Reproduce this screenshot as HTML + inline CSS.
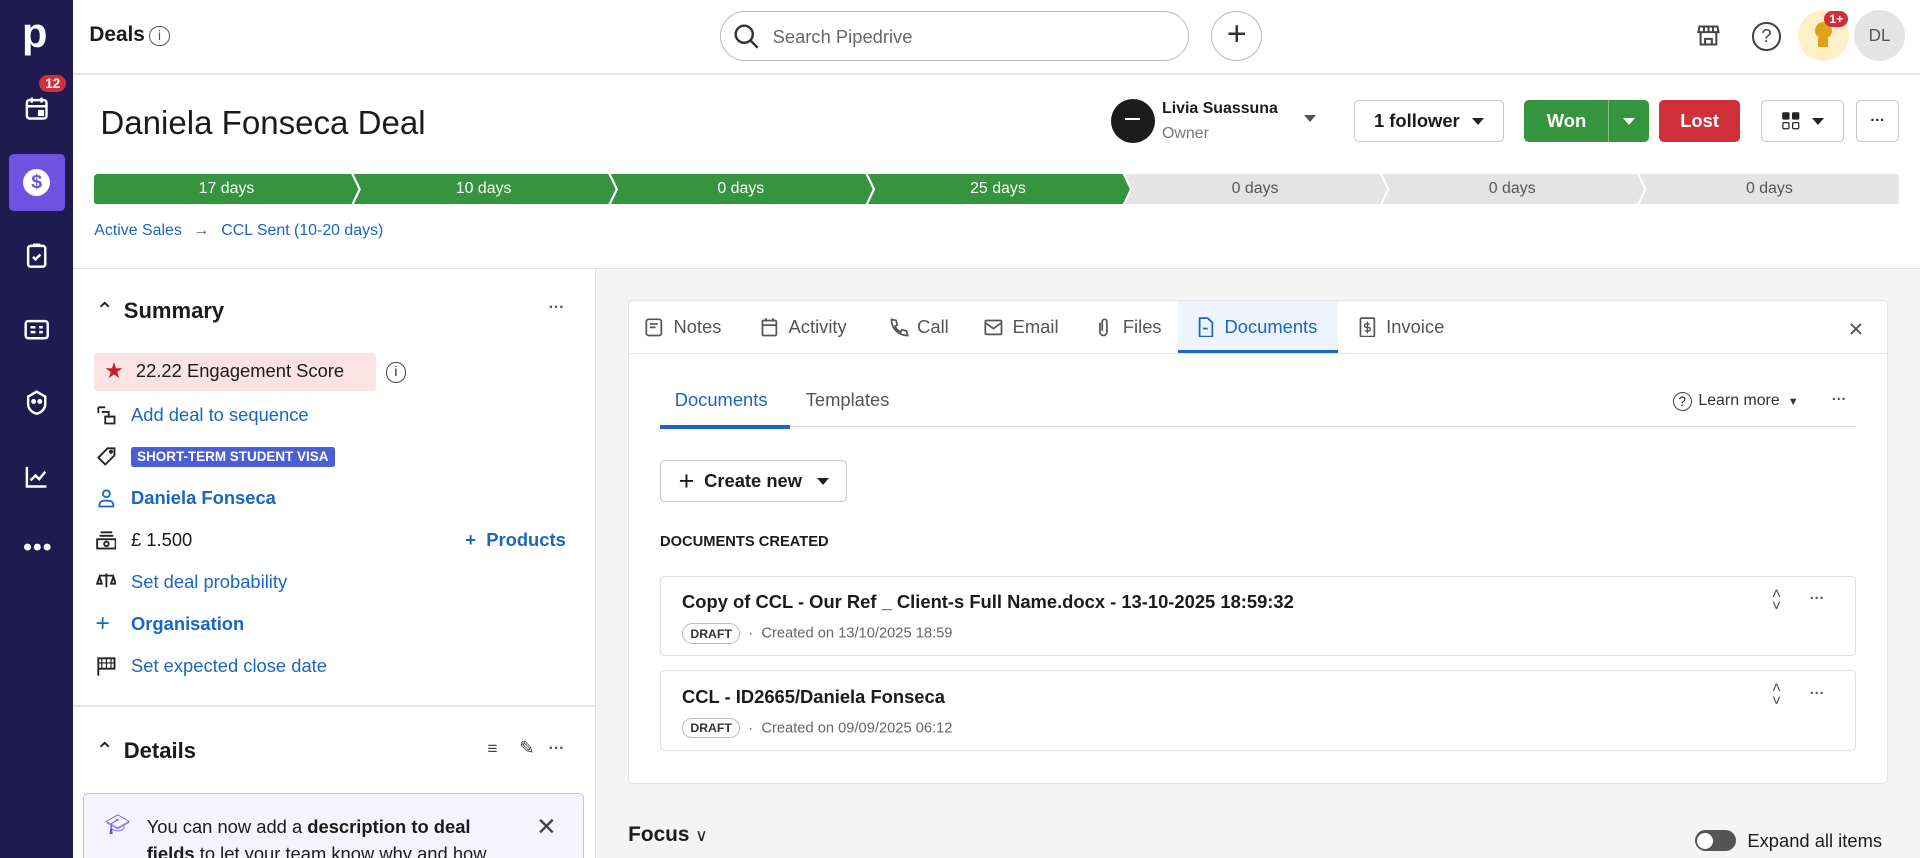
<!DOCTYPE html>
<html><head><meta charset="utf-8">
<style>
html{zoom:1.22449;background:#fff;overflow:hidden;height:701px}
body{margin:0;width:1568px;height:701px;position:relative;overflow:hidden;font-family:"Liberation Sans",sans-serif;color:#1b1b1b;background:#fff}
.a{position:absolute}
.sb{left:0;top:0;width:60px;height:701px;background:#1f1a4f}
.ic{position:absolute;left:18px;width:24px;height:24px}
.blue{color:#1a66c0}
.seg{position:absolute;top:142px;height:24px;line-height:25px;text-align:center;font-size:13px;color:#fff}
.btn{position:absolute;border:1px solid #c8c8c8;border-radius:4px;background:#fff;box-sizing:border-box;font-weight:bold;font-size:15px;display:flex;align-items:center;justify-content:center}
.row{position:absolute;left:78px;font-size:15px;display:flex;align-items:center;height:22px}
.row svg{margin-right:12px}
.tab{position:absolute;top:257px;font-size:15px;color:#555;display:flex;align-items:center;height:20px}
.tab svg{margin-right:7px}
.card{position:absolute;left:539px;width:977px;height:66px;border:1px solid #ddd;border-radius:4px;background:#fff;box-sizing:border-box}
.draft{display:inline-block;border:1px solid #bbb;border-radius:10px;font-size:10px;font-weight:bold;padding:2px 6px;color:#333}
</style></head><body>
<div class="a sb"></div>
<div class="a" style="left:18px;top:10px;color:#fff;font-size:34px;font-weight:bold;line-height:34px">p</div>
<div class="a" style="left:32px;top:61px;background:#d0303a;color:#fff;font-size:11px;font-weight:bold;border-radius:9px;padding:1px 5px">12</div>
<svg class="ic" style="top:77px" viewBox="0 0 24 24" fill="none" stroke="#fff" stroke-width="2"><rect x="4" y="5" width="16" height="15" rx="2"/><path d="M4 10h16M8 3v4M16 3v4"/><rect x="14" y="14" width="3" height="3" fill="#fff"/></svg>
<div class="a" style="left:7px;top:126px;width:46px;height:46px;background:#6e52e0;border-radius:4px"></div>
<div class="a" style="left:19px;top:138px;width:22px;height:22px;border-radius:50%;background:#fff;color:#6e52e0;font-weight:bold;font-size:16px;text-align:center;line-height:22px">$</div>
<svg class="ic" style="top:197px" viewBox="0 0 24 24" fill="none" stroke="#fff" stroke-width="2"><rect x="5" y="4" width="14" height="17" rx="2"/><path d="M9 13l2 2 4-4M9 3h6"/></svg>
<svg class="ic" style="top:257px" viewBox="0 0 24 24" fill="none" stroke="#fff" stroke-width="2"><rect x="3" y="5" width="18" height="14" rx="2"/><path d="M7 10h4M7 14h4M14 10h3M14 14h3"/></svg>
<svg class="ic" style="top:317px" viewBox="0 0 24 24" fill="none" stroke="#fff" stroke-width="2"><path d="M12 3l7 4v6c0 4-3 7-7 8-4-1-7-4-7-8V7z"/><circle cx="9.5" cy="11" r="1"/><circle cx="14.5" cy="11" r="1"/></svg>
<svg class="ic" style="top:377px" viewBox="0 0 24 24" fill="none" stroke="#fff" stroke-width="2"><path d="M4 4v16h16M7 15l4-4 3 3 5-6"/></svg>
<div class="a" style="left:19px;top:436px;color:#fff;font-size:20px;letter-spacing:1px;font-weight:bold">•••</div>

<div class="a" style="left:60px;top:60px;width:1508px;height:1px;background:#e3e3e3"></div>
<div class="a" style="left:73px;top:19px;font-size:17px;font-weight:bold">Deals</div>
<div class="a" style="left:122px;top:21px;width:15px;height:15px;border:1.5px solid #555;border-radius:50%;font-size:11px;text-align:center;line-height:15px;color:#555">i</div>
<div class="a" style="left:588px;top:9px;width:383px;height:41px;border:1px solid #bbb;border-radius:21px;box-sizing:border-box"></div>
<svg class="a" style="left:598px;top:18px" width="24" height="24" viewBox="0 0 24 24" fill="none" stroke="#333" stroke-width="2"><circle cx="10" cy="10" r="7"/><path d="M15 15l6 6"/></svg>
<div class="a" style="left:631px;top:21px;font-size:15px;color:#666">Search Pipedrive</div>
<div class="a" style="left:989px;top:9px;width:42px;height:41px;border:1px solid #bbb;border-radius:50%;box-sizing:border-box;text-align:center;line-height:36px;font-size:28px;color:#333">+</div>
<svg class="a" style="left:1384px;top:18px" width="22" height="22" viewBox="0 0 24 24" fill="none" stroke="#444" stroke-width="1.8"><path d="M4 4h16l1 5H3zM5 9v11h14V9M8 4v5M12 4v5M16 4v5M9 20v-5h6v5"/></svg>
<div class="a" style="left:1431px;top:18px;width:20px;height:20px;border:1.8px solid #444;border-radius:50%;text-align:center;line-height:20px;font-size:15px;color:#444">?</div>
<div class="a" style="left:1468px;top:8px;width:42px;height:42px;border-radius:50%;background:#fdf0c8"></div>
<div class="a" style="left:1482px;top:18px;width:14px;height:14px;border-radius:50%;background:#e0a11a"></div>
<div class="a" style="left:1485px;top:31px;width:8px;height:7px;background:#e0a11a"></div>
<div class="a" style="left:1490px;top:9px;background:#d0303a;color:#fff;font-size:10px;font-weight:bold;border-radius:9px;padding:1px 4px">1+</div>
<div class="a" style="left:1514px;top:8px;width:42px;height:42px;border-radius:50%;background:#e4e4e4;text-align:center;line-height:42px;font-size:14px;color:#555">DL</div>

<div class="a" style="left:82px;top:86px;font-size:27px">Daniela Fonseca Deal</div>
<div class="a" style="left:907px;top:81px;width:36px;height:36px;border-radius:50%;background:#1c1c1c"></div>
<div class="a" style="left:919px;top:96px;width:12px;height:2px;background:#fff"></div>
<div class="a" style="left:949px;top:82px;font-size:13px;font-weight:bold">Livia Suassuna</div>
<div class="a" style="left:949px;top:102px;font-size:13px;color:#777">Owner</div>
<div class="a" style="left:1065px;top:94px;border:5px solid transparent;border-top:6px solid #555"></div>
<div class="btn" style="left:1106px;top:82px;width:122px;height:34px">1 follower<span style="margin-left:10px;border:5px solid transparent;border-top:6px solid #222;margin-top:6px"></span></div>
<div class="btn" style="left:1245px;top:82px;width:102px;height:34px;background:#36943f;border-color:#36943f;color:#fff;justify-content:flex-start"><span style="width:67px;text-align:center">Won</span><span style="width:1px;height:34px;background:#7cc083"></span><span style="margin-left:12px;border:5px solid transparent;border-top:6px solid #fff;margin-top:6px"></span></div>
<div class="btn" style="left:1355px;top:82px;width:66px;height:34px;background:#d0303a;border-color:#d0303a;color:#fff">Lost</div>
<div class="btn" style="left:1438px;top:82px;width:68px;height:34px"><svg width="16" height="16" viewBox="0 0 16 16"><rect x="1" y="1" width="6" height="6" rx="1" fill="#222"/><rect x="9" y="1" width="6" height="6" rx="1" fill="#222"/><rect x="1.5" y="9.5" width="5" height="5" rx="1" fill="none" stroke="#222"/><rect x="9.5" y="9.5" width="5" height="5" rx="1" fill="none" stroke="#222"/></svg><span style="margin-left:10px;border:5px solid transparent;border-top:6px solid #222;margin-top:6px"></span></div>
<div class="btn" style="left:1516px;top:82px;width:35px;height:34px;font-size:12px">···</div>

<svg class="a" style="left:77px;top:142px" width="1474" height="25">
<path d="M3 0H210l6 12.5-6 12.5H3a3 3 0 0 1-3-3V3a3 3 0 0 1 3-3z" fill="#36943f"/>
<path d="M212 0h208l6 12.5-6 12.5H212l6-12.5z" fill="#36943f"/>
<path d="M422 0h208l6 12.5-6 12.5H422l6-12.5z" fill="#36943f"/>
<path d="M632 0h208l6 12.5-6 12.5H632l6-12.5z" fill="#36943f"/>
<path d="M842 0h208l6 12.5-6 12.5H842l6-12.5z" fill="#e4e4e4"/>
<path d="M1052 0h208l6 12.5-6 12.5H1052l6-12.5z" fill="#e4e4e4"/>
<path d="M1262 0h209a3 3 0 0 1 3 3v19a3 3 0 0 1-3 3H1262l6-12.5z" fill="#e4e4e4"/>
</svg>
<div class="seg" style="left:80px;width:210px">17 days</div>
<div class="seg" style="left:290px;width:210px">10 days</div>
<div class="seg" style="left:500px;width:210px">0 days</div>
<div class="seg" style="left:710px;width:210px">25 days</div>
<div class="seg" style="left:920px;width:210px;color:#555">0 days</div>
<div class="seg" style="left:1130px;width:210px;color:#555">0 days</div>
<div class="seg" style="left:1340px;width:210px;color:#555">0 days</div>
<div class="a blue" style="left:77px;top:181px;font-size:13px">Active Sales <span style="color:#666;margin:0 6px">→</span> CCL Sent (10-20 days)</div>
<div class="a" style="left:60px;top:219px;width:1508px;height:1px;background:#e3e3e3"></div>

<div class="a" style="left:487px;top:220px;width:1081px;height:481px;background:#f4f4f4"></div>
<div class="a" style="left:486px;top:220px;width:1px;height:481px;background:#e0e0e0"></div>

<div class="a" style="left:78px;top:243px;font-size:18px;font-weight:bold"><span style="font-weight:normal;margin-right:8px">⌃</span>Summary</div>
<div class="a" style="left:448px;top:244px;font-size:13px;font-weight:bold;color:#555">···</div>
<div class="a" style="left:77px;top:288px;width:230px;height:31px;background:#fbe3e3;border-radius:3px"></div>
<div class="a" style="left:85px;top:292px;color:#c42030;font-size:18px">★</div>
<div class="a" style="left:111px;top:294px;font-size:15px">22.22 Engagement Score</div>
<div class="a" style="left:315px;top:296px;width:15px;height:15px;border:1.5px solid #444;border-radius:50%;font-size:11px;text-align:center;line-height:15px">i</div>
<div class="row blue" style="top:328px"><svg width="17" height="17" viewBox="0 0 18 18" fill="none" stroke="#222" stroke-width="1.6"><path d="M2 2h6M2 2v5M5 6h6v5M8 10h8v6H8z"/></svg>Add deal to sequence</div>
<div class="row" style="top:362px"><svg width="17" height="17" viewBox="0 0 18 18" fill="none" stroke="#222" stroke-width="1.6"><path d="M10 2h6v6l-8 8-6-6z"/><circle cx="13" cy="5" r="1"/></svg><span style="background:#4a5fd6;color:#fff;font-size:11px;font-weight:bold;padding:2px 5px;border-radius:2px">SHORT-TERM STUDENT VISA</span></div>
<div class="row blue" style="top:396px;font-weight:bold"><svg width="17" height="17" viewBox="0 0 18 18" fill="none" stroke="#1a66c0" stroke-width="1.6"><circle cx="9" cy="5" r="3"/><path d="M3 16v-2a4 4 0 0 1 4-3h4a4 4 0 0 1 4 3v2z"/></svg>Daniela Fonseca</div>
<div class="row" style="top:430px"><svg width="17" height="17" viewBox="0 0 18 18" fill="none" stroke="#222" stroke-width="1.6"><path d="M4 2h10M3 5h12"/><rect x="1" y="8" width="16" height="8"/><circle cx="9" cy="12" r="2"/></svg>£ 1.500</div>
<div class="a blue" style="left:380px;top:432px;font-size:15px;font-weight:bold">+ &nbsp;Products</div>
<div class="row blue" style="top:464px"><svg width="17" height="17" viewBox="0 0 18 18" fill="none" stroke="#222" stroke-width="1.6"><path d="M9 2v12M3 4h12M1 11l2-6 2 6zM13 11l2-6 2 6z"/></svg>Set deal probability</div>
<div class="row blue" style="top:499px;font-weight:bold"><span style="width:17px;margin-right:12px;font-size:20px;font-weight:normal">+</span>Organisation</div>
<div class="row blue" style="top:533px"><svg width="17" height="17" viewBox="0 0 18 18" fill="none" stroke="#222" stroke-width="1.6"><path d="M2 17V2h14v9H2"/><path d="M5 2v9M9 2v9M13 2v9M2 6h14" stroke-width="1"/></svg>Set expected close date</div>
<div class="a" style="left:60px;top:576px;width:426px;height:1px;background:#e3e3e3"></div>
<div class="a" style="left:78px;top:603px;font-size:18px;font-weight:bold"><span style="font-weight:normal;margin-right:8px">⌃</span>Details</div>
<div class="a" style="left:398px;top:603px;font-size:14px;color:#444">≡</div>
<div class="a" style="left:424px;top:602px;font-size:15px;color:#444">✎</div>
<div class="a" style="left:448px;top:604px;font-size:13px;font-weight:bold;color:#555">···</div>
<div class="a" style="left:68px;top:648px;width:409px;height:53px;background:#f5f3fe;border:1px solid #c8bff0;border-bottom:none;border-radius:4px 4px 0 0;box-sizing:border-box;overflow:hidden">
<div class="a" style="left:17px;top:15px;color:#6a4ae0;font-size:16px">🎓︎</div>
<div class="a" style="left:51px;top:16px;font-size:15px;line-height:22px;width:300px">You can now add a <b>description to deal fields</b> to let your team know why and how</div>
<div class="a" style="left:369px;top:14px;font-size:20px;color:#444">✕</div>
</div>

<div class="a" style="left:513px;top:245px;width:1029px;height:395px;background:#fff;border:1px solid #e3e3e3;border-radius:4px;box-sizing:border-box"></div>
<div class="a" style="left:513px;top:288px;width:1029px;height:1px;background:#e3e3e3"></div>
<div class="a" style="left:962px;top:246px;width:131px;height:42px;background:#eef4fd;border-bottom:3px solid #1a66c0;box-sizing:border-box"></div>
<div class="tab" style="left:526px"><svg width="17" height="17" viewBox="0 0 18 18" fill="none" stroke="#555" stroke-width="1.5"><rect x="2" y="2" width="13" height="14" rx="2"/><path d="M5 6h7M5 9h5"/></svg>Notes</div>
<div class="tab" style="left:620px"><svg width="17" height="17" viewBox="0 0 18 18" fill="none" stroke="#555" stroke-width="1.5"><rect x="3" y="3" width="12" height="13" rx="1"/><path d="M3 7h12M6 1v3M12 1v3"/></svg>Activity</div>
<div class="tab" style="left:725px"><svg width="17" height="17" viewBox="0 0 18 18" fill="none" stroke="#555" stroke-width="1.5"><path d="M3 2l4 1 1 4-2 1c1 2 3 4 5 5l1-2 4 1 1 4c-8 0-14-6-14-14z"/></svg>Call</div>
<div class="tab" style="left:803px"><svg width="17" height="17" viewBox="0 0 18 18" fill="none" stroke="#555" stroke-width="1.5"><rect x="2" y="3" width="14" height="12" rx="1"/><path d="M2 5l7 5 7-5"/></svg>Email</div>
<div class="tab" style="left:893px"><svg width="17" height="17" viewBox="0 0 18 18" fill="none" stroke="#555" stroke-width="1.5"><path d="M6 5v8a3 3 0 0 0 6 0V4a2 2 0 0 0-4 0v8"/></svg>Files</div>
<div class="tab" style="left:976px;color:#1a66c0"><svg width="17" height="17" viewBox="0 0 18 18" fill="none" stroke="#1a66c0" stroke-width="1.5"><path d="M4 1h7l4 4v12H4z"/><path d="M7 10h4"/></svg>Documents</div>
<div class="tab" style="left:1108px"><svg width="17" height="17" viewBox="0 0 18 18" fill="none" stroke="#555" stroke-width="1.5"><rect x="3" y="1" width="12" height="16" rx="1"/><path d="M11 6H8a1.5 1.5 0 0 0 0 3h2a1.5 1.5 0 0 1 0 3H7M9 4v10" stroke-width="1.2"/></svg>Invoice</div>
<div class="a" style="left:1509px;top:260px;font-size:16px;color:#555">✕</div>
<div class="a blue" style="left:551px;top:318px;font-size:15px">Documents</div>
<div class="a" style="left:658px;top:318px;font-size:15px;color:#555">Templates</div>
<div class="a" style="left:539px;top:348px;width:977px;height:1px;background:#ddd"></div>
<div class="a" style="left:539px;top:347px;width:106px;height:3px;background:#1a66c0"></div>
<div class="a" style="left:1366px;top:320px;width:14px;height:14px;border:1.3px solid #444;border-radius:50%;font-size:11px;text-align:center;line-height:14px">?</div>
<div class="a" style="left:1387px;top:320px;font-size:13px;color:#333">Learn more <span style="font-size:9px;margin-left:3px">▼</span></div>
<div class="a" style="left:1496px;top:320px;font-size:12px;font-weight:bold;color:#555">···</div>
<div class="btn" style="left:539px;top:376px;width:153px;height:34px"><span style="font-size:22px;font-weight:normal;margin-right:8px">+</span>Create new<span style="margin-left:12px;border:5px solid transparent;border-top:6px solid #222;margin-top:6px"></span></div>
<div class="a" style="left:539px;top:436px;font-size:12px;font-weight:bold">DOCUMENTS CREATED</div>
<div class="card" style="top:470px"></div>
<div class="a" style="left:557px;top:483px;font-size:15px;font-weight:bold">Copy of CCL - Our Ref _ Client-s Full Name.docx - 13-10-2025 18:59:32</div>
<div class="a" style="left:557px;top:509px;font-size:12px;color:#666"><span class="draft">DRAFT</span> &nbsp;·&nbsp; Created on 13/10/2025 18:59</div>
<div class="card" style="top:547px"></div>
<div class="a" style="left:557px;top:560px;font-size:15px;font-weight:bold">CCL - ID2665/Daniela Fonseca</div>
<div class="a" style="left:557px;top:586px;font-size:12px;color:#666"><span class="draft">DRAFT</span> &nbsp;·&nbsp; Created on 09/09/2025 06:12</div>
<div class="a" style="left:1447px;top:481px;font-size:13px;color:#555;line-height:10px">˄<br>˅</div>
<div class="a" style="left:1478px;top:483px;font-size:12px;font-weight:bold;color:#555">···</div>
<div class="a" style="left:1447px;top:558px;font-size:13px;color:#555;line-height:10px">˄<br>˅</div>
<div class="a" style="left:1478px;top:560px;font-size:12px;font-weight:bold;color:#555">···</div>

<div class="a" style="left:513px;top:672px;font-size:17px;font-weight:bold;line-height:20px">Focus <span style="font-weight:normal;font-size:14px">∨</span></div>
<div class="a" style="left:1384px;top:678px;width:34px;height:17px;border-radius:9px;background:#555"></div>
<div class="a" style="left:1386px;top:680px;width:13px;height:13px;border-radius:50%;background:#fff"></div>
<div class="a" style="left:1427px;top:678px;font-size:15px;line-height:18px">Expand all items</div>
</body></html>
